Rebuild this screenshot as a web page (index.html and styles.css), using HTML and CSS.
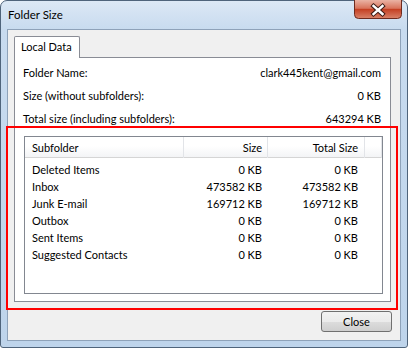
FILE: index.html
```html
<!DOCTYPE html>
<html lang="en">
<head>
    <meta charset="UTF-8">
    <title>Folder Size</title>
    <link rel="stylesheet" href="styles.css">
</head>
<body>

<div class="window">
    <div class="titlebar">
        <span class="title">Folder Size</span>
        <div class="close-x">
            <svg width="48" height="19" viewBox="0 0 48 19">
                <defs>
                    <linearGradient id="red" x1="0" y1="0" x2="0" y2="1">
                        <stop offset="0" stop-color="#eab3a4"/>
                        <stop offset="0.45" stop-color="#d8735b"/>
                        <stop offset="0.5" stop-color="#c43f22"/>
                        <stop offset="1" stop-color="#d9836a"/>
                    </linearGradient>
                </defs>
                <path d="M0.5 0 V14.5 Q0.5 18.5 4.5 18.5 H43.5 Q47.5 18.5 47.5 14.5 V0" fill="url(#red)" stroke="#6e2b1f"/>
                <path d="M19.5 6 L28.5 14 M28.5 6 L19.5 14" stroke="#3a1a14" stroke-width="4.4" stroke-linecap="square"/>
                <path d="M19.5 6 L28.5 14 M28.5 6 L19.5 14" stroke="#fff" stroke-width="2.4" stroke-linecap="square"/>
            </svg>
        </div>
    </div>

    <div class="client">
        <div class="tabs">
            <div class="tab">Local Data</div>
        </div>
        <div class="panel">
            <div class="info-row"><span>Folder Name:</span><span>clark445kent@gmail.com</span></div>
            <div class="info-row"><span>Size (without subfolders):</span><span>0 KB</span></div>
            <div class="info-row"><span>Total size (including subfolders):</span><span>643294 KB</span></div>

            <div class="listview">
                <div class="lv-header">
                    <span class="col-name">Subfolder</span>
                    <span class="col-size">Size</span>
                    <span class="col-total">Total Size</span>
                    <span class="col-fill"></span>
                </div>
                <div class="lv-body">
                    <div class="lv-row"><span class="col-name">Deleted Items</span><span class="col-size">0 KB</span><span class="col-total">0 KB</span></div>
                    <div class="lv-row"><span class="col-name">Inbox</span><span class="col-size">473582 KB</span><span class="col-total">473582 KB</span></div>
                    <div class="lv-row"><span class="col-name">Junk E-mail</span><span class="col-size">169712 KB</span><span class="col-total">169712 KB</span></div>
                    <div class="lv-row"><span class="col-name">Outbox</span><span class="col-size">0 KB</span><span class="col-total">0 KB</span></div>
                    <div class="lv-row"><span class="col-name">Sent Items</span><span class="col-size">0 KB</span><span class="col-total">0 KB</span></div>
                    <div class="lv-row"><span class="col-name">Suggested Contacts</span><span class="col-size">0 KB</span><span class="col-total">0 KB</span></div>
                </div>
            </div>
        </div>
        <div class="footer">
            <button class="btn">Close</button>
        </div>
    </div>

    <!-- red annotation box -->
    <div class="highlight"></div>
</div>

</body>
</html>
```

FILE: styles.css
```css
* {
    box-sizing: border-box;
}
body {
    margin: 0;
    font-family: Lato, "Noto Sans", sans-serif;
    font-size: 11px;
    color: #000;
}
.window {
    position: relative;
    width: 408px;
    height: 348px;
    border: 1px solid #4f647b;
    border-radius: 7px 7px 3px 3px;
    background: linear-gradient(#dce8f5, #c8dbef 28px, #bed4eb);
    display: flex;
    flex-direction: column;
}
.titlebar {
    height: 28px;
    display: flex;
    align-items: flex-start;
    padding-left: 7px;
}
.title {
    line-height: 28px;
    font-size: 11.5px;
}
.close-x {
    margin-left: auto;
    margin-right: 5px;
    margin-top: -1px;
    height: 19px;
}
.close-x svg {
    display: block;
}
.client {
    margin: 0 6px;
    height: 312px;
    border: 1px solid #8ea2b9;
    background: #f0f0f0;
    display: flex;
    flex-direction: column;
}
.tabs {
    display: flex;
    padding: 6px 0 0 6px;
}
.tab {
    position: relative;
    z-index: 1;
    width: 66px;
    height: 22px;
    margin-bottom: -1px;
    border: 1px solid #898c95;
    border-bottom: none;
    border-radius: 2px 2px 0 0;
    background: #fff;
    padding-left: 6px;
    line-height: 20px;
}
.panel {
    margin-left: 6px;
    width: 377px;
    height: 245px;
    border: 1px solid #898c95;
    background: #fff;
    padding: 3px 9px 0 8px;
}
.info-row {
    display: flex;
    justify-content: space-between;
    height: 23px;
    line-height: 23px;
}
.listview {
    margin: 6px 0 0 1px;
    width: 359px;
    height: 158px;
    border: 1px solid #828790;
}
.lv-header,
.lv-row {
    display: grid;
    grid-template-columns: 159px 84px 97px 1fr;
}
.lv-header {
    height: 21px;
    border-bottom: 1px solid #d5d5d5;
    background: linear-gradient(#fff, #fff 45%, #f3f4f6);
}
.lv-header span {
    border-right: 1px solid #e2e4e8;
    line-height: 21px;
}
.lv-body {
    padding-top: 3px;
}
.lv-row {
    height: 17px;
    line-height: 17px;
}
.col-name {
    padding-left: 7px;
    white-space: nowrap;
}
.col-size {
    text-align: right;
    padding-right: 6px;
}
.col-total {
    text-align: right;
    padding-right: 7px;
}
.lv-header .col-size {
    padding-right: 5px;
}
.lv-header .col-total {
    padding-right: 6px;
}
.footer {
    display: flex;
    justify-content: flex-end;
    padding: 9px 8px 0 0;
}
.btn {
    width: 71px;
    height: 21px;
    padding: 0;
    border: 1px solid #707070;
    border-radius: 3px;
    background: linear-gradient(#f2f2f2, #ebebeb 50%, #dddddd 50%, #cfcfcf);
    font: inherit;
    color: #000;
}
.highlight {
    position: absolute;
    left: 5px;
    top: 125px;
    width: 392px;
    height: 184px;
    border: 2px solid #f00;
    pointer-events: none;
}
```
